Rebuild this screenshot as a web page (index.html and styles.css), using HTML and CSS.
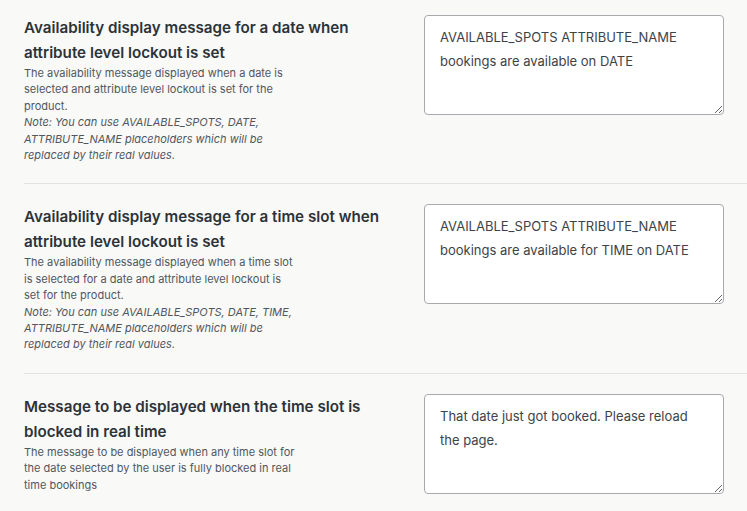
FILE: index.html
```html
<!DOCTYPE html>
<html lang="en">
<head>
    <meta charset="UTF-8">
    <meta name="viewport" content="width=device-width, initial-scale=1.0">
    <title>Booking Messages</title>
    <link rel="stylesheet" href="styles.css">
</head>
<body>
    <div class="settings">
        <div class="setting-row">
            <div class="setting-label">
                <h3>Availability display message for a date when attribute level lockout is set</h3>
                <p class="description">The availability message displayed when a date is selected and attribute level lockout is set for the product.<br>
                <em>Note: You can use AVAILABLE_SPOTS, DATE, ATTRIBUTE_NAME placeholders which will be replaced by their real values.</em></p>
            </div>
            <textarea class="setting-input">AVAILABLE_SPOTS ATTRIBUTE_NAME bookings are available on DATE</textarea>
        </div>

        <div class="setting-row">
            <div class="setting-label">
                <h3>Availability display message for a time slot when attribute level lockout is set</h3>
                <p class="description">The availability message displayed when a time slot is selected for a date and attribute level lockout is set for the product.<br>
                <em>Note: You can use AVAILABLE_SPOTS, DATE, TIME, ATTRIBUTE_NAME placeholders which will be replaced by their real values.</em></p>
            </div>
            <textarea class="setting-input">AVAILABLE_SPOTS ATTRIBUTE_NAME bookings are available for TIME on DATE</textarea>
        </div>

        <div class="setting-row">
            <div class="setting-label">
                <h3>Message to be displayed when the time slot is blocked in real time</h3>
                <p class="description">The message to be displayed when any time slot for the date selected by the user is fully blocked in real time bookings</p>
            </div>
            <textarea class="setting-input">That date just got booked. Please reload the page.</textarea>
        </div>
    </div>
</body>
</html>
```

FILE: styles.css
```css
body {
    font-family: Inter, 'Noto Sans', sans-serif;
    background-color: #f9f9f8;
    margin: 0;
    color: #1d2327;
    overflow: hidden;
}

.settings {
    margin-top: -5px;
    padding-left: 24px;
}

.setting-row {
    display: flex;
    align-items: flex-start;
    gap: 20px;
    padding: 20px 0;
    border-bottom: 1px solid #e2e2e2;
}

.setting-row:last-child {
    border-bottom: none;
}

.setting-label {
    flex: 0 0 380px;
}

.setting-label h3 {
    margin: 0;
    font-size: 15.2px;
    font-weight: 600;
    line-height: 25px;
    color: #2c3338;
}

.description {
    margin: 0;
    max-width: 272px;
    font-size: 11px;
    line-height: 16.4px;
    color: #50575e;
}

.setting-input {
    flex: 0 0 300px;
    box-sizing: border-box;
    height: 100px;
    margin-top: 0;
    padding: 9px 15px;
    border: 1px solid #a7aaad;
    border-radius: 4px;
    background-color: #fff;
    font-family: Inter, 'Noto Sans', sans-serif;
    font-size: 13px;
    line-height: 24px;
    color: #3c434a;
    resize: vertical;
}
```
